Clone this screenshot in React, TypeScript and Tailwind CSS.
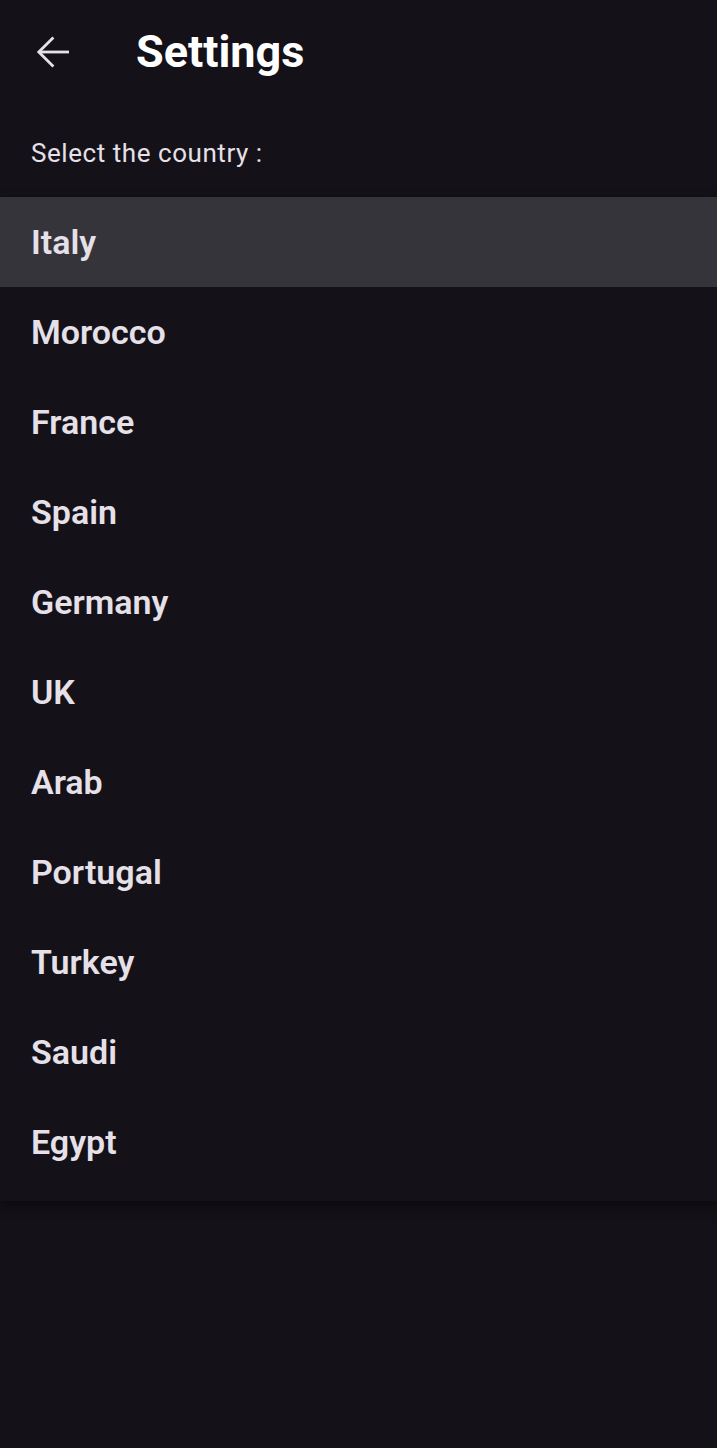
import React from "react";

const countries = ["Italy", "Morocco", "France", "Spain", "Germany", "UK", "Arab", "Portugal", "Turkey", "Saudi", "Egypt"];

export default function App() {
  return (
    <div className="w-[717px] h-[1448px] bg-[#141218] text-[#e6e0e9] overflow-hidden" style={{ fontFamily: "Roboto, 'Noto Sans', sans-serif" }}>
      <div className="h-[104px] flex items-center">
        <div className="w-[136px] flex items-center">
          <svg width="48" height="48" viewBox="0 0 24 24" className="ml-[29px]" fill="none" stroke="#e6e0e9" strokeWidth="1.4" strokeLinecap="butt" strokeLinejoin="miter">
            <path d="M20 12H5.2" />
            <path d="M12.2 4.7L4.9 12l7.3 7.3" />
          </svg>
        </div>
        <h1 className="text-[45px] font-bold text-white leading-none -mt-[2px]">Settings</h1>
      </div>
      <div className="pt-[33px] pl-[31px] text-[26px] leading-[32px] tracking-[0.55px] text-[#e6e0e9]">Select the country :</div>
      <div className="mt-[27px] pb-[14px] bg-[#141218] shadow-[0_6px_12px_rgba(0,0,0,0.45)] border-t border-[#0f0e12]">
        {countries.map((c, i) => (
          <div key={c} className={`h-[90px] flex items-center pl-[31px] text-[34px] font-semibold ${i === 0 ? "bg-[#36343b]" : ""}`}>
            {c}
          </div>
        ))}
      </div>
    </div>
  );
}
